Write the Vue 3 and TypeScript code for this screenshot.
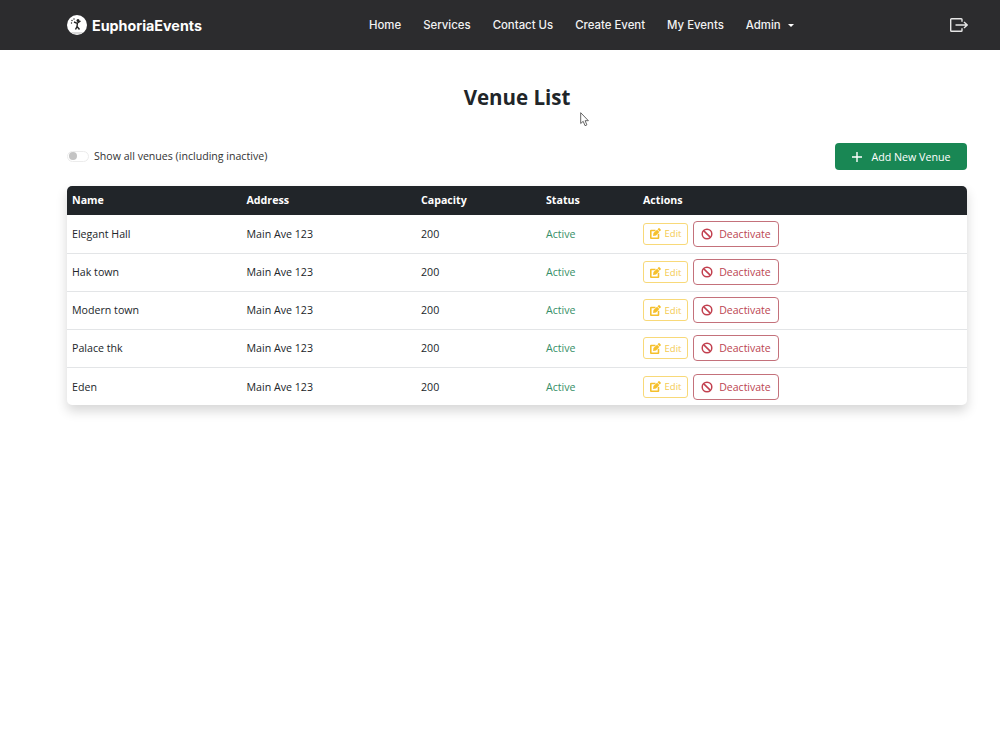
<script setup lang="ts">
interface Venue {
  name: string;
  address: string;
  capacity: number;
  status: string;
}

const navLinks = ['Home', 'Services', 'Contact Us', 'Create Event', 'My Events'];

const venues: Venue[] = [
  { name: 'Elegant Hall', address: 'Main Ave 123', capacity: 200, status: 'Active' },
  { name: 'Hak town', address: 'Main Ave 123', capacity: 200, status: 'Active' },
  { name: 'Modern town', address: 'Main Ave 123', capacity: 200, status: 'Active' },
  { name: 'Palace thk', address: 'Main Ave 123', capacity: 200, status: 'Active' },
  { name: 'Eden', address: 'Main Ave 123', capacity: 200, status: 'Active' }
];
</script>

<template>
  <div class="page">
    <nav class="navbar">
      <a class="brand">
        <svg class="logo" viewBox="0 0 20 20" width="20" height="20">
          <circle cx="10" cy="10" r="10" fill="#fff" />
          <path d="M3.500 17 A10 10 0 0 0 16.500 17 Z" fill="#d8d8d8" />
          <circle cx="11" cy="5.500" r="1.500" fill="#222" />
          <path d="M10.500 7.500 L10 11.500 L8.500 14.500 M10.500 8 L13.500 6 M10.300 8.300 L7 7 M10 11.500 L12.500 14.500" stroke="#222" stroke-width="1.400" fill="none" />
          <circle cx="5" cy="5.500" r="0.700" fill="#222" />
          <circle cx="7" cy="4" r="0.700" fill="#222" />
          <circle cx="4.500" cy="8" r="0.700" fill="#222" />
        </svg>
        <span>EuphoriaEvents</span>
      </a>
      <div class="nav-links">
        <a v-for="link in navLinks" :key="link" class="nav-link">{{ link }}</a>
        <a class="nav-link">Admin<i class="caret"></i></a>
      </div>
      <svg class="logout" viewBox="0 0 18 14" width="18" height="14" fill="none" stroke="#e6e6e6" stroke-width="1.400">
        <path d="M12 3.800 V1.500 A.8 .8 0 0 0 11.200 .7 H1.500 A.8 .8 0 0 0 .7 1.500 V12.500 A.8 .8 0 0 0 1.500 13.300 H11.200 A.8 .8 0 0 0 12 12.500 V10.200" />
        <path d="M5.500 7 H17 M14 4 L17.200 7 L14 10" />
      </svg>
    </nav>

    <main class="content">
      <h1>Venue List</h1>

      <div class="toolbar">
        <label class="switch-row">
          <span class="switch"><i></i></span>
          <span>Show all venues (including inactive)</span>
        </label>
        <button class="btn-add">
          <svg viewBox="0 0 12 12" width="12" height="12" stroke="#fff" stroke-width="1.400">
            <path d="M6 1 V11 M1 6 H11" />
          </svg>
          Add New Venue
        </button>
      </div>

      <div class="table-wrap">
        <table>
          <thead>
            <tr>
              <th class="col-name">Name</th>
              <th class="col-address">Address</th>
              <th class="col-capacity">Capacity</th>
              <th class="col-status">Status</th>
              <th>Actions</th>
            </tr>
          </thead>
          <tbody>
            <tr v-for="venue in venues" :key="venue.name">
              <td>{{ venue.name }}</td>
              <td>{{ venue.address }}</td>
              <td>{{ venue.capacity }}</td>
              <td class="status">{{ venue.status }}</td>
              <td>
                <div class="actions">
                  <button class="btn-edit">
                    <svg viewBox="0 0 16 16" width="11" height="11" fill="#f5c02c">
                      <path d="M15.500 2.200 13.800.5a1 1 0 0 0-1.400 0L11 1.900 14.100 5l1.400-1.400a1 1 0 0 0 0-1.400zM5 7.200 4.500 11.500l4.300-.5 4.800-5.300-3.300-3.100z" />
                      <path d="M1.500 2.500A1.500 1.500 0 0 0 0 4v10.500A1.500 1.500 0 0 0 1.500 16H12a1.500 1.500 0 0 0 1.500-1.500V8.500h-2.300V13.700H2.300V4.800H8V2.500z" />
                    </svg>
                    Edit
                  </button>
                  <button class="btn-deactivate">
                    <svg viewBox="0 0 12 12" width="12" height="12" fill="none" stroke="#c2404f" stroke-width="1.500">
                      <circle cx="6" cy="6" r="4.800" />
                      <path d="M2.600 2.600 9.400 9.400" />
                    </svg>
                    Deactivate
                  </button>
                </div>
              </td>
            </tr>
          </tbody>
        </table>
      </div>
    </main>

    <!-- mouse cursor captured in the screenshot -->
    <svg class="cursor" viewBox="0 0 10 15" width="10" height="15">
      <path d="M.7.7V11.500L3.200 9.300 5 13.700 6.900 12.900 5.100 8.700H8.400Z" fill="#fff" stroke="#555" stroke-width=".9" />
    </svg>
  </div>
</template>

<style scoped>
.page {
  position: relative;
  min-height: 751px;
  background: #fff;
  color: #212529;
  font-family: "Open Sans", "Noto Sans", sans-serif;
  overflow: hidden;
}

.navbar {
  height: 50px;
  box-sizing: border-box;
  padding: 0 32px 0 67px;
  display: flex;
  align-items: center;
  background: #2c2c2e;
  font-family: Inter, "Open Sans", sans-serif;
}

.brand {
  display: flex;
  align-items: center;
  gap: 5px;
  color: #fff;
  font-size: 14.300px;
  font-weight: 700;
  width: 302px;
}

.nav-links {
  display: flex;
  gap: 22px;
  flex: 1;
}

.nav-link {
  color: #f2f2f2;
  font-size: 11.400px;
  font-weight: 500;
}

.caret {
  display: inline-block;
  margin-left: 7px;
  vertical-align: 2px;
  border-top: 3px solid #fff;
  border-left: 3px solid transparent;
  border-right: 3px solid transparent;
}

.content {
  padding: 0 33px 0 67px;
}

h1 {
  margin: 32px 0 0;
  height: 30px;
  line-height: 30px;
  text-align: center;
  font-size: 20.500px;
  font-weight: 700;
  color: #212529;
}

.toolbar {
  margin-top: 31px;
  height: 27px;
  display: flex;
  justify-content: space-between;
  align-items: center;
}

.switch-row {
  display: flex;
  align-items: center;
  gap: 5px;
  font-size: 10.600px;
  color: #333;
  margin-top: -1px;
}

.switch {
  width: 22px;
  height: 11px;
  box-sizing: border-box;
  border: 1px solid #ececec;
  border-radius: 6px;
  display: flex;
  align-items: center;
  padding-left: 1px;
}

.switch i {
  width: 8px;
  height: 8px;
  border-radius: 50%;
  background: #c4c4c4;
}

.btn-add {
  width: 132px;
  height: 27px;
  border: 0;
  border-radius: 4px;
  background: #198754;
  color: #fff;
  font: 10.700px "Open Sans", sans-serif;
  display: flex;
  align-items: center;
  justify-content: center;
  gap: 8px;
}

.table-wrap {
  margin-top: 16px;
  border-radius: 5px;
  overflow: hidden;
  box-shadow: 0 6px 12px rgba(0, 0, 0, 0.16);
}

table {
  width: 100%;
  border-collapse: collapse;
  table-layout: fixed;
  font-size: 10.650px;
}

th {
  height: 29px;
  box-sizing: border-box;
  padding: 0 5px 1px;
  text-align: left;
  background: #212529;
  color: #fff;
  font-weight: 700;
}

.col-name,
.col-address {
  width: 174.500px;
}

.col-capacity {
  width: 125px;
}

.col-status {
  width: 97px;
}

td {
  height: 38.100px;
  box-sizing: border-box;
  padding: 0 5px;
  border-bottom: 1px solid #e3e5e7;
  color: #212529;
}

tbody tr:last-child td {
  border-bottom: 0;
}

.status {
  color: #378f68;
}

.actions {
  display: flex;
  align-items: center;
  gap: 5px;
}

.actions button {
  display: flex;
  align-items: center;
  background: #fff;
  font-family: "Open Sans", sans-serif;
  padding: 0;
  justify-content: center;
}

.btn-edit {
  width: 45px;
  height: 22px;
  gap: 4px;
  border: 1px solid #f8d979;
  border-radius: 3px;
  color: #f4ca50;
  font-size: 9.500px;
}

.btn-deactivate {
  width: 86px;
  height: 26px;
  gap: 6px;
  border: 1px solid #c4717b;
  border-radius: 4px;
  color: #bb4451;
  font-size: 10.500px;
}

.logout {
  display: block;
}

.cursor {
  position: absolute;
  left: 580px;
  top: 112px;
}
</style>
